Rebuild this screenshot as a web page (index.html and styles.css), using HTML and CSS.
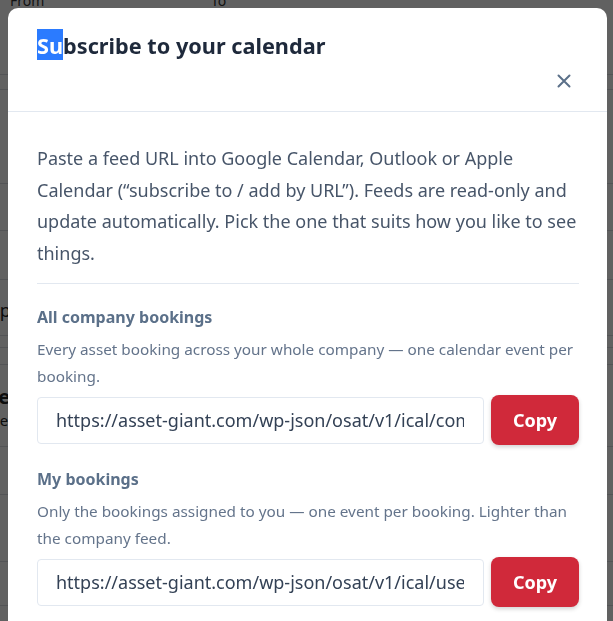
FILE: index.html
```html
<!DOCTYPE html>
<html lang="en">
<head>
<meta charset="utf-8">
<title>Subscribe to your calendar</title>
<link rel="stylesheet" href="styles.css">
</head>
<body>
<div class="page">
  <div class="row r1"><span class="lbl">From</span><span class="lbl lbl-to">To</span></div>
  <div class="row r2"></div>
  <div class="row r3"></div>
  <div class="row r4"></div>
  <div class="row r5"></div>
  <div class="row r6"><span class="frag">Corp</span></div>
  <div class="row r7"></div>
  <div class="row r8"></div>
  <div class="row r9"><span class="frag frag-b">Title</span><span class="frag frag-s">note</span></div>
  <div class="row r10"></div>
  <div class="row r11"></div>
  <div class="row r12"></div>
</div>

<div class="overlay">
  <div class="modal" role="dialog" aria-labelledby="mtitle">
    <div class="modal-header">
      <h2 class="modal-title" id="mtitle"><span class="sel">Su</span>bscribe to your calendar</h2>
      <button class="close" aria-label="Close">
        <svg width="14" height="14" viewBox="0 0 14 14"><path d="M1.5 1.5 L12.5 12.5 M12.5 1.5 L1.5 12.5" stroke="currentColor" stroke-width="2" stroke-linecap="round" fill="none"/></svg>
      </button>
    </div>
    <div class="modal-body">
      <p class="intro">Paste a feed URL into Google Calendar, Outlook or Apple Calendar (“subscribe to / add by URL”). Feeds are read-only and update automatically. Pick the one that suits how you like to see things.</p>
      <hr class="sep">
      <section class="feed">
        <h3 class="feed-title">All company bookings</h3>
        <p class="feed-desc">Every asset booking across your whole company — one calendar event per booking.</p>
        <div class="feed-row">
          <input class="feed-url" type="text" readonly value="https://asset-giant.com/wp-json/osat/v1/ical/company/8f3a2c91e7b4d05a">
          <button class="copy">Copy</button>
        </div>
      </section>
      <section class="feed">
        <h3 class="feed-title">My bookings</h3>
        <p class="feed-desc">Only the bookings assigned to you — one event per booking. Lighter than the company feed.</p>
        <div class="feed-row">
          <input class="feed-url" type="text" readonly value="https://asset-giant.com/wp-json/osat/v1/ical/user/4b7e19d2a6c3f805">
          <button class="copy">Copy</button>
        </div>
      </section>
    </div>
  </div>
</div>
</body>
</html>
```
FILE: styles.css
```css
html, body {
  margin: 0;
  padding: 0;
  height: 100%;
  overflow: hidden;
  background: #ffffff;
  font-family: "Noto Sans", "Open Sans", "Liberation Sans", sans-serif;
}

/* background page */
.page {
  margin-top: -8px;
}
.row {
  border-bottom: 1px solid #d9dde3;
  box-sizing: border-box;
  color: #222;
  font-size: 15px;
  position: relative;
}
.r1 { height: 83px; display: flex; padding-left: 10px; }
.lbl { width: 201px; font-size: 14px; line-height: 18px; color: #333; }
.r2 { height: 15px; }
.r3 { height: 94px; }
.r4 { height: 47px; }
.r5 { height: 49px; }
.r6 { height: 56px; padding-top: 18px; font-size: 18px; }
.frag { display: inline-block; margin-left: -30px; }
.r7 { height: 12px; }
.r8 { height: 17px; }
.r9 { height: 82px; padding-top: 18px; }
.frag-b { font-weight: 700; font-size: 20px; margin-left: -34px; display: block; }
.frag-s { display: block; margin-left: -24px; font-size: 15px; }
.r10 { height: 48px; }
.r11 { height: 67px; }
.r12 { height: 44px; }

/* overlay */
.overlay {
  position: fixed;
  inset: 0;
  background: rgba(0, 0, 0, 0.62);
}
.modal {
  position: absolute;
  top: 8px;
  left: 8px;
  width: 599px;
  height: 700px;
  background: #ffffff;
  border-radius: 10px;
  overflow: hidden;
}
.modal-header {
  display: flex;
  justify-content: space-between;
  align-items: flex-start;
  padding: 23px 36px 0 29px;
  height: 104px;
  box-sizing: border-box;
  border-bottom: 1px solid #e2e8f0;
}
.modal-title {
  margin: 0;
  font-size: 21.7px;
  line-height: 30px;
  font-weight: 700;
  color: #1e293b;
}
.sel {
  background: #2b7bff;
  color: #ffffff;
  padding: 2px 0 0;
}
.close {
  align-self: flex-end;
  margin-bottom: 23px;
  background: none;
  border: 0;
  padding: 0;
  width: 14px;
  height: 14px;
  color: #5b7089;
  display: flex;
  cursor: pointer;
}

.modal-body {
  padding: 31px 28px 0 29px;
}
.intro {
  margin: 0;
  font-size: 18px;
  line-height: 31.6px;
  color: #475569;
}
.sep {
  border: 0;
  border-top: 1px solid #e2e8f0;
  margin: 14px 0 21px;
}
.feed {
  margin-bottom: 22px;
}
.feed-title {
  margin: 0 0 7px;
  font-size: 16px;
  line-height: 24px;
  font-weight: 700;
  color: #5b7089;
}
.feed-desc {
  margin: 0 0 5px;
  font-size: 15.3px;
  line-height: 27px;
  color: #64748b;
}
.feed-row {
  display: flex;
  align-items: center;
  gap: 7px;
}
.feed-url {
  flex: 1;
  min-width: 0;
  height: 47px;
  box-sizing: border-box;
  border: 1px solid #e2e8f0;
  border-radius: 4px;
  padding: 0 19px 0 18px;
  font-family: inherit;
  font-size: 18px;
  color: #334155;
  background: #fff;
  outline: none;
}
.copy {
  width: 88px;
  height: 50px;
  border: 0;
  border-radius: 8px;
  background: #d0293a;
  color: #ffffff;
  font-family: inherit;
  font-size: 18px;
  font-weight: 700;
  box-shadow: 0 2px 4px rgba(0, 0, 0, 0.18);
  cursor: pointer;
}
```
